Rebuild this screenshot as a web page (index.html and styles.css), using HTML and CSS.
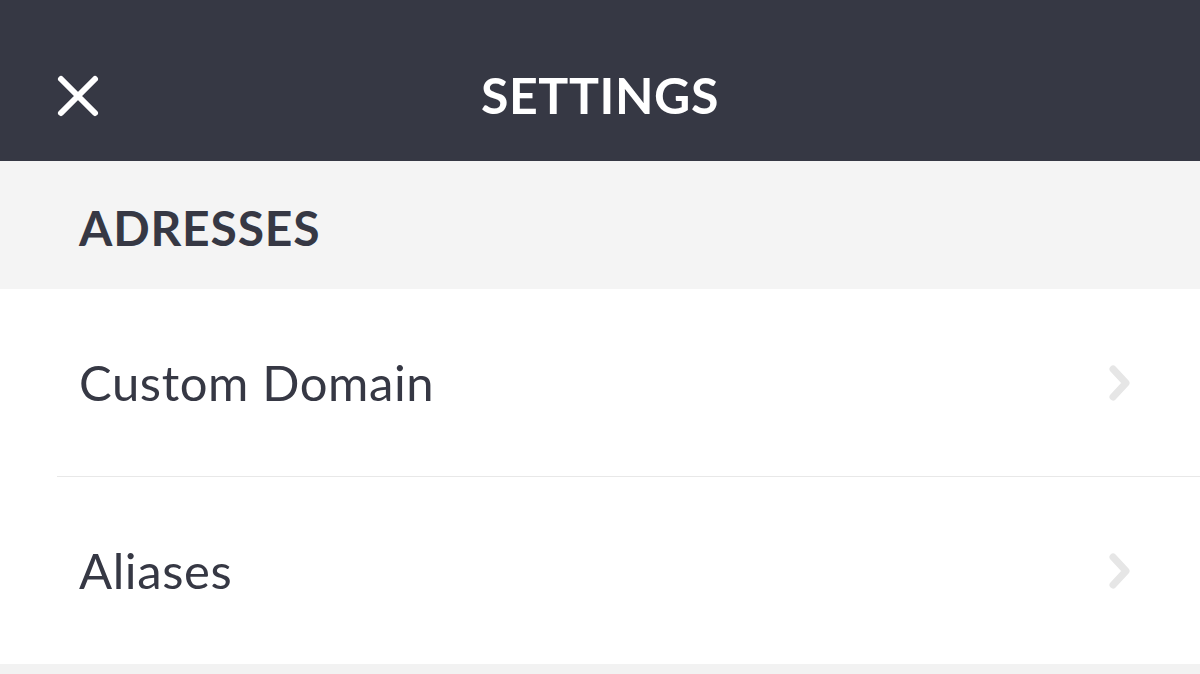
FILE: index.html
```html
<!DOCTYPE html>
<html>
<head>
<meta charset="utf-8">
<link rel="stylesheet" href="styles.css">
</head>
<body>
<div class="app">
  <header class="topbar">
    <button class="close" aria-label="Close">
      <svg width="44" height="44" viewBox="0 0 44 44"><path d="M5 5 L39 39 M39 5 L5 39" stroke="#fff" stroke-width="6" stroke-linecap="round" fill="none"/></svg>
    </button>
    <h1 class="title">SETTINGS</h1>
  </header>
  <div class="section-head">ADRESSES</div>
  <ul class="list">
    <li class="row"><span class="label">Custom Domain</span><svg class="chev" width="24" height="36" viewBox="0 0 24 36"><path d="M5 4 L18 18 L5 32" stroke="#e6e6e6" stroke-width="7" stroke-linecap="round" stroke-linejoin="round" fill="none"/></svg></li>
    <li class="row"><span class="label">Aliases</span><svg class="chev" width="24" height="36" viewBox="0 0 24 36"><path d="M5 4 L18 18 L5 32" stroke="#e6e6e6" stroke-width="7" stroke-linecap="round" stroke-linejoin="round" fill="none"/></svg></li>
  </ul>
  <div class="footer-strip"></div>
</div>
</body>
</html>
```

FILE: styles.css
```css
* { box-sizing: border-box; }
html, body { margin: 0; padding: 0; }
body { font-family: "Lato", "Noto Sans", sans-serif; background: #fff; width: 1200px; height: 674px; overflow: hidden; }
.app { display: flex; flex-direction: column; height: 674px; }
.topbar {
  height: 161px; background: #363844; display: flex; align-items: center; justify-content: center; position: relative;
}
.close {
  position: absolute; left: 56px; top: 74px; padding: 0; margin: 0; border: 0; background: none; width: 44px; height: 44px; display: block;
}
.close svg { display: block; }
.title { margin: 0; color: #fff; font-size: 50px; font-weight: 700; letter-spacing: 0.6px; line-height: 1; padding-top: 28px; }
.section-head {
  height: 128px; background: #f4f4f4; color: #363844; font-size: 48px; font-weight: 700; display: flex; align-items: center; padding-left: 79px; padding-top: 4px; letter-spacing: 0.8px;
}
.list { list-style: none; margin: 0; padding: 0 0 0 57px; }
.row {
  height: 187px; display: flex; align-items: center; justify-content: space-between; padding-left: 22px; padding-right: 68px; color: #363844; font-size: 49px; font-weight: 400;
}
.row + .row { border-top: 1px solid #e8e8e8; height: 188px; }
.label { line-height: 1; letter-spacing: 0.6px; }
.chev { display: block; }
.footer-strip { flex: 1; background: #f2f2f2; }
```
